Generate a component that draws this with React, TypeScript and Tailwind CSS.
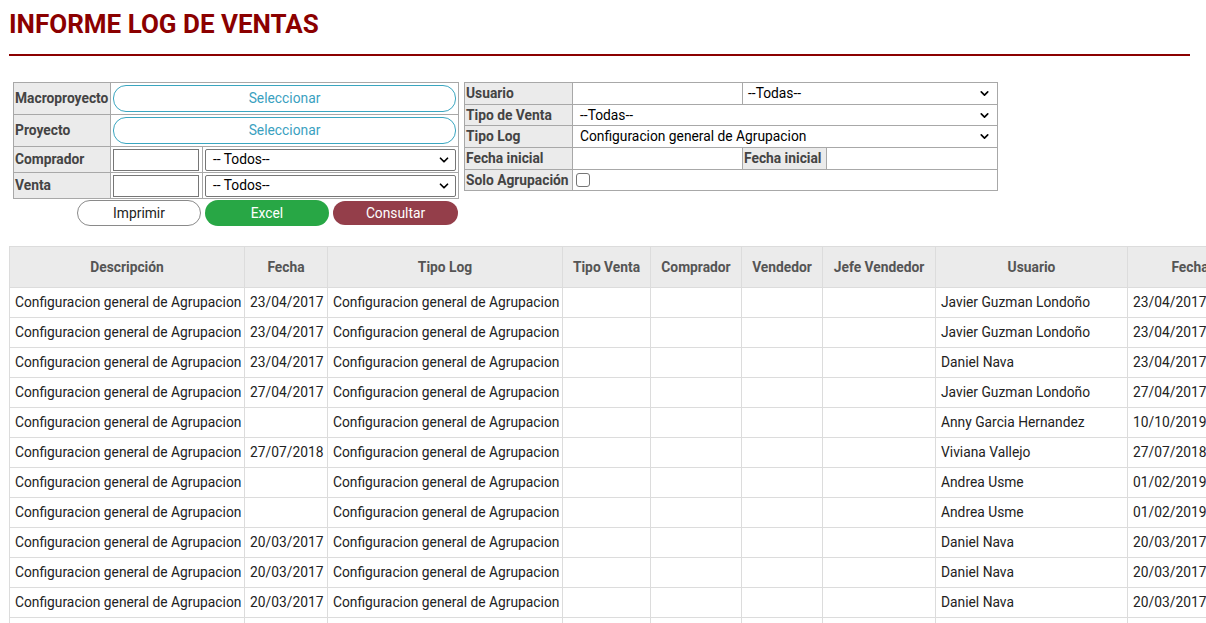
import { ChevronDown } from "lucide-react";

const columns = [
  { label: "Descripción", w: "w-[235px]" },
  { label: "Fecha", w: "w-[83px]" },
  { label: "Tipo Log", w: "w-[235px]" },
  { label: "Tipo Venta", w: "w-[88px]" },
  { label: "Comprador", w: "w-[91px]" },
  { label: "Vendedor", w: "w-[81px]" },
  { label: "Jefe Vendedor", w: "w-[113px]" },
  { label: "Usuario", w: "w-[192px]" },
  { label: "Fecha", w: "w-[125px]" },
  { label: "Observación", w: "w-[160px]" },
];

const desc = "Configuracion general de Agrupacion";

const rows = [
  { fecha: "23/04/2017", usuario: "Javier Guzman Londoño", fechaSis: "23/04/2017" },
  { fecha: "23/04/2017", usuario: "Javier Guzman Londoño", fechaSis: "23/04/2017" },
  { fecha: "23/04/2017", usuario: "Daniel Nava", fechaSis: "23/04/2017" },
  { fecha: "27/04/2017", usuario: "Javier Guzman Londoño", fechaSis: "27/04/2017" },
  { fecha: "", usuario: "Anny Garcia Hernandez", fechaSis: "10/10/2019" },
  { fecha: "27/07/2018", usuario: "Viviana Vallejo", fechaSis: "27/07/2018" },
  { fecha: "", usuario: "Andrea Usme", fechaSis: "01/02/2019" },
  { fecha: "", usuario: "Andrea Usme", fechaSis: "01/02/2019" },
  { fecha: "20/03/2017", usuario: "Daniel Nava", fechaSis: "20/03/2017" },
  { fecha: "20/03/2017", usuario: "Daniel Nava", fechaSis: "20/03/2017" },
  { fecha: "20/03/2017", usuario: "Daniel Nava", fechaSis: "20/03/2017" },
  { fecha: "20/03/2017", usuario: "Daniel Nava", fechaSis: "20/03/2017" },
];

function FakeSelect({ text }: { text: string }) {
  return (
    <div className="flex h-[22px] items-center justify-between rounded-[2px] border border-[#767676] bg-white pl-[7px] pr-[4px] text-[13.8px] text-black">
      <span>{text}</span>
      <ChevronDown className="h-[14px] w-[14px]" strokeWidth={3} />
    </div>
  );
}

function CellSelect({ text }: { text: string }) {
  return (
    <div className="flex items-center justify-between pr-[6px] text-[13.8px] text-black">
      <span>{text}</span>
      <ChevronDown className="h-[13px] w-[13px]" strokeWidth={3} />
    </div>
  );
}

export default function App() {
  const lbl = "border border-[#a8a8a8] bg-[#ebebeb] px-[1px] text-left text-[13.8px] font-bold text-[#444] whitespace-nowrap";
  const cell = "border border-[#a8a8a8] bg-white";

  return (
    <div className="w-[1206px] h-[623px] overflow-hidden bg-white font-['Roboto',sans-serif]">
      {/* Header */}
      <div className="pl-[9px] pr-[16px]">
        <h1 className="mt-[8px] text-[26px] font-bold leading-[33px] text-[#8b0000]">INFORME LOG DE VENTAS</h1>
        <div className="mt-[13px] h-[2px] bg-[#8b0000]" />
      </div>

      {/* Filtros */}
      <div className="mt-[26px] flex items-start">
        <div className="ml-[13px] w-[445px]">
          <table className="w-[445px] table-fixed border-collapse">
            <colgroup>
              <col className="w-[97px]" />
              <col className="w-[92px]" />
              <col className="w-[256px]" />
            </colgroup>
            <tbody>
              <tr className="h-[32px]">
                <td className={lbl}>Macroproyecto</td>
                <td className={cell + " px-[2px]"} colSpan={2}>
                  <button className="h-[27px] w-full rounded-[13px] border border-[#3aa6c0] bg-white text-[13.8px] text-[#3aa1bf]">
                    Seleccionar
                  </button>
                </td>
              </tr>
              <tr className="h-[32px]">
                <td className={lbl}>Proyecto</td>
                <td className={cell + " px-[2px]"} colSpan={2}>
                  <button className="h-[27px] w-full rounded-[13px] border border-[#3aa6c0] bg-white text-[13.8px] text-[#3aa1bf]">
                    Seleccionar
                  </button>
                </td>
              </tr>
              <tr className="h-[26px]">
                <td className={lbl}>Comprador</td>
                <td className={cell + " px-[2px]"}>
                  <div className="h-[22px] w-[86px] border border-[#767676]" />
                </td>
                <td className={cell + " px-[2px]"}>
                  <FakeSelect text="-- Todos--" />
                </td>
              </tr>
              <tr className="h-[26px]">
                <td className={lbl}>Venta</td>
                <td className={cell + " px-[2px]"}>
                  <div className="h-[22px] w-[86px] border border-[#767676]" />
                </td>
                <td className={cell + " px-[2px]"}>
                  <FakeSelect text="-- Todos--" />
                </td>
              </tr>
            </tbody>
          </table>
          <div className="mt-[1px] flex justify-end gap-[4px]">
            <button className="h-[26px] w-[124px] rounded-[13px] border border-[#8a8a8a] bg-white text-[13.8px] text-[#222]">Imprimir</button>
            <button className="h-[26px] w-[124px] rounded-[13px] bg-[#28a745] text-[13.8px] text-white">Excel</button>
            <button className="mt-[1px] h-[24px] w-[125px] rounded-[12px] bg-[#943e4a] text-[13.8px] text-white">Consultar</button>
          </div>
        </div>

        <table className="ml-[6px] w-[533px] table-fixed border-collapse">
          <colgroup>
            <col className="w-[108px]" />
            <col className="w-[170px]" />
            <col className="w-[84px]" />
            <col className="w-[171px]" />
          </colgroup>
          <tbody>
            <tr className="h-[21px]">
              <td className={lbl}>Usuario</td>
              <td className={cell} />
              <td className={cell + " pl-[5px]"} colSpan={2}>
                <CellSelect text="--Todas--" />
              </td>
            </tr>
            <tr className="h-[21px]">
              <td className={lbl}>Tipo de Venta</td>
              <td className={cell + " pl-[7px]"} colSpan={3}>
                <CellSelect text="--Todas--" />
              </td>
            </tr>
            <tr className="h-[21px]">
              <td className={lbl}>Tipo Log</td>
              <td className={cell + " pl-[7px]"} colSpan={3}>
                <CellSelect text="Configuracion general de Agrupacion" />
              </td>
            </tr>
            <tr className="h-[21px]">
              <td className={lbl}>Fecha inicial</td>
              <td className={cell} />
              <td className={lbl}>Fecha inicial</td>
              <td className={cell} />
            </tr>
            <tr className="h-[21px]">
              <td className={lbl}>Solo Agrupación</td>
              <td className={cell + " pl-[3px]"} colSpan={3}>
                <div className="h-[14px] w-[14px] rounded-[3px] border border-[#767676] bg-white" />
              </td>
            </tr>
          </tbody>
        </table>
      </div>

      {/* Tabla de resultados */}
      <table className="ml-[9px] mt-[20px] w-[1403px] table-fixed border-collapse text-[13.8px]">
        <colgroup>
          {columns.map((c, i) => (
            <col key={i} className={c.w} />
          ))}
        </colgroup>
        <thead>
          <tr className="h-[41px] bg-[#ebebeb]">
            {columns.map((c, i) => (
              <th key={i} className="border border-[#dcdcdc] px-[5px] text-center font-bold text-[#555]">
                {c.label}
              </th>
            ))}
          </tr>
        </thead>
        <tbody>
          {rows.map((r, i) => (
            <tr key={i} className="h-[30px] text-[#222]">
              <td className="border border-[#dcdcdc] px-[5px] whitespace-nowrap">{desc}</td>
              <td className="border border-[#dcdcdc] px-[5px] whitespace-nowrap">{r.fecha}</td>
              <td className="border border-[#dcdcdc] px-[5px] whitespace-nowrap">{desc}</td>
              <td className="border border-[#dcdcdc]" />
              <td className="border border-[#dcdcdc]" />
              <td className="border border-[#dcdcdc]" />
              <td className="border border-[#dcdcdc]" />
              <td className="border border-[#dcdcdc] px-[5px] whitespace-nowrap">{r.usuario}</td>
              <td className="border border-[#dcdcdc] px-[5px] whitespace-nowrap">{r.fechaSis}</td>
              <td className="border border-[#dcdcdc]" />
            </tr>
          ))}
        </tbody>
      </table>
    </div>
  );
}
